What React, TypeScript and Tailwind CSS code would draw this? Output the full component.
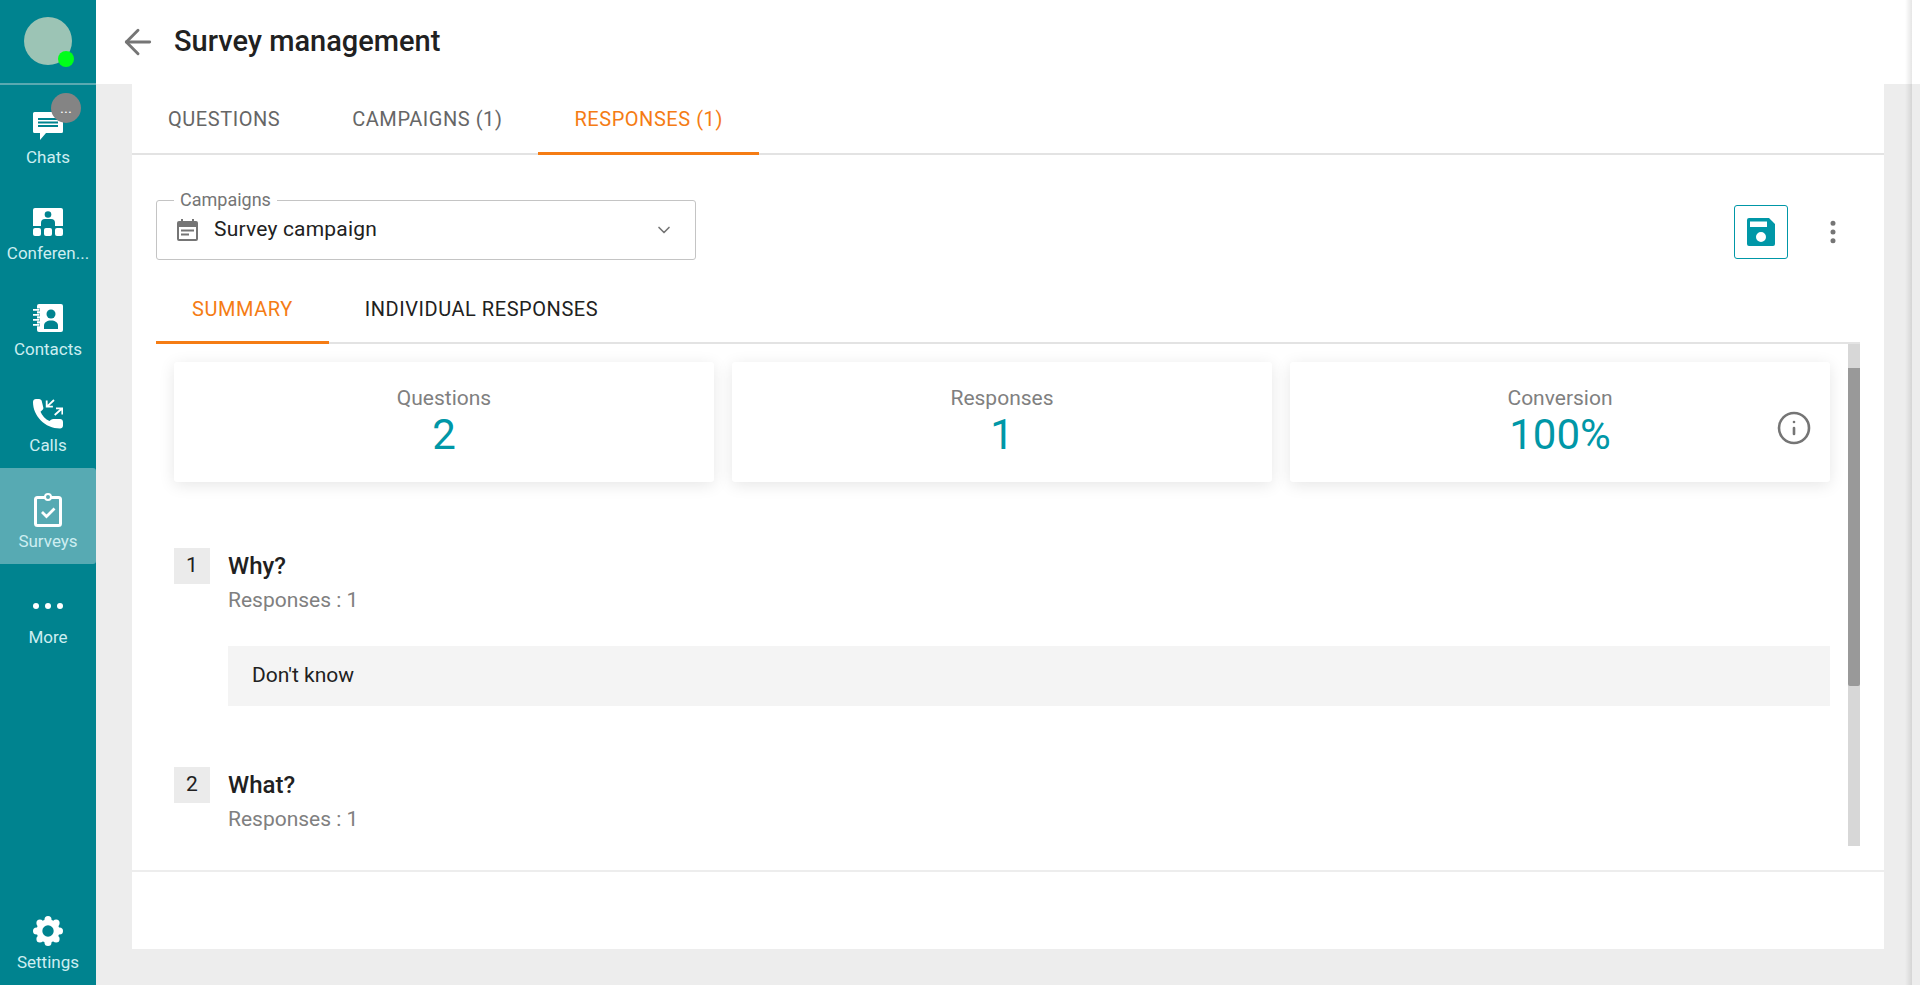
import React from "react";
import { ArrowLeft, ChevronDown, Info, MoreVertical } from "lucide-react";

const font = { fontFamily: "Roboto, sans-serif" };

const ChatIcon = () => (
  <svg width="30" height="28" viewBox="0 0 30 28" fill="white">
    <path d="M1.500 0h27A1.500 1.500 0 0 1 30 1.500v18a1.500 1.500 0 0 1-1.500 1.500H13l-6 7v-7H1.500A1.500 1.500 0 0 1 0 19.500v-18A1.500 1.500 0 0 1 1.500 0z" />
    <path d="M5 6h20v2H5zM5 9.500h20v2H5zM5 13h20v2H5z" fill="#00838f" />
  </svg>
);

const ConferenceIcon = () => (
  <svg width="30" height="28" viewBox="0 0 30 28" fill="white">
    <path d="M2 0h26a2 2 0 0 1 2 2v16H0V2a2 2 0 0 1 2-2z" />
    <circle cx="15" cy="6.500" r="3.300" fill="#00838f" />
    <path d="M8 18v-3a4 4 0 0 1 4-4h6a4 4 0 0 1 4 4v3z" fill="#00838f" />
    <rect x="0" y="20" width="8" height="8" rx="2" />
    <rect x="11" y="20" width="8" height="8" rx="2" />
    <rect x="22" y="20" width="8" height="8" rx="2" />
  </svg>
);

const ContactsIcon = () => (
  <svg width="30" height="28" viewBox="0 0 30 28" fill="white">
    <path d="M4 2a2 2 0 0 1 2-2h22a2 2 0 0 1 2 2v24a2 2 0 0 1-2 2H6a2 2 0 0 1-2-2z" />
    <path d="M0 4.500h7v2.800H0zM0 9.500h7v2.800H0zM0 14.500h7v2.800H0zM0 19.500h7v2.800H0z" fill="#00838f" />
    <path d="M0 5h6.500v1.800H0zM0 10h6.500v1.800H0zM0 15h6.500v1.800H0zM0 20h6.500v1.800H0z" />
    <circle cx="18" cy="10" r="4.500" fill="#00838f" />
    <path d="M11 25v-3.500c0-3 3-5 7-5s7 2 7 5V25z" fill="#00838f" />
  </svg>
);

const CallsIcon = () => (
  <svg width="30" height="30" viewBox="0 0 30 30" fill="none">
    <path fill="white" d="M3 0h3c1.500 0 2.500 1 2.800 2.200l1.500 6.300c.3 1.200-.3 2-1.200 2.700l-1.600 1.500c1.500 3.800 5 7.600 9 9.300l1.500-1.200c.8-.6 1.600-.8 2.500-.8H27c1.700 0 3 1.300 3 3v3.500c0 1.700-1.300 3-3 3C12 29.500 0 17 0 3c0-1.700 1.300-3 3-3z" />
    <path stroke="white" strokeWidth="1.800" d="M21 1l-7 6.700M13.700 1.500v6.200h6.200M21.700 16l7.600-6.700M23 9.300h6.300v6.200" />
  </svg>
);

const SurveysIcon = () => (
  <svg width="28" height="34" viewBox="0 0 28 34" fill="none">
    <rect x="1.500" y="4.500" width="25" height="28" rx="2" stroke="white" strokeWidth="3" />
    <circle cx="14" cy="4" r="3" stroke="white" strokeWidth="2" fill="#57aab3" />
    <path d="M8 19l4.500 4.500L20.500 15.500" stroke="white" strokeWidth="2.800" />
  </svg>
);

// eight rounded lobes round a disc with a small hole
const SettingsIcon = () => (
  <svg width="30" height="30" viewBox="0 0 30 30" fill="white">
    <circle cx="15" cy="15" r="11.500" />
    <circle cx="15" cy="3.500" r="3.500" />
    <circle cx="15" cy="26.500" r="3.500" />
    <circle cx="3.500" cy="15" r="3.500" />
    <circle cx="26.500" cy="15" r="3.500" />
    <circle cx="6.900" cy="6.900" r="3.500" />
    <circle cx="23.100" cy="6.900" r="3.500" />
    <circle cx="6.900" cy="23.100" r="3.500" />
    <circle cx="23.100" cy="23.100" r="3.500" />
    <circle cx="15" cy="15" r="5.700" fill="#00838f" />
  </svg>
);

const CalendarIcon = () => (
  <svg width="21" height="22" viewBox="0 0 21 22" fill="#757575">
    <path fillRule="evenodd" d="M4 0h2v2h9V0h2v2h2a2 2 0 0 1 2 2v16a2 2 0 0 1-2 2H2a2 2 0 0 1-2-2V4a2 2 0 0 1 2-2h2zM2 8v12h17V8z" />
    <path d="M4 10.500h13v2H4zM4 14.500h8v2H4z" />
  </svg>
);

const SaveIcon = () => (
  <svg width="28" height="28" viewBox="0 0 28 28" fill="#0097a7">
    <path fillRule="evenodd" d="M2 0h20l6 6v20a2 2 0 0 1-2 2H2a2 2 0 0 1-2-2V2a2 2 0 0 1 2-2zm1 3.500V9h17V3.500zM14 14a5 5 0 1 0 0 10 5 5 0 0 0 0-10z" />
  </svg>
);

const NavItem = ({ icon, label, active, badge }: { icon: React.ReactNode; label: string; active?: boolean; badge?: boolean }) => (
  <div className={`relative flex h-24 w-full shrink-0 flex-col items-center rounded-r-[3px] pt-6 ${active ? "bg-[#57aab3]" : ""}`}>
    <div className="flex h-9 items-center justify-center">{icon}</div>
    <span className="mt-[3px] w-full truncate text-center text-[17px] leading-5 text-[#cdeef1]">{label}</span>
    {badge && (
      <span className="absolute left-[51px] top-[9px] flex h-[30px] w-[30px] items-center justify-center rounded-full bg-[#848484] text-[15px] leading-none text-white">
        ...
      </span>
    )}
  </div>
);

const StatCard = ({ label, value, info }: { label: string; value: string; info?: boolean }) => (
  <div className="relative flex h-[120px] flex-1 flex-col items-center rounded-[3px] bg-white pt-6 shadow-[0_3px_16px_rgba(0,0,0,0.1)]">
    <span className="text-[21px] leading-6 text-[#808080]">{label}</span>
    <span className="text-[42px] leading-[50px] text-[#0097a7]">{value}</span>
    {info && <Info className="absolute right-[18px] top-[48px] text-[#757575]" size={36} strokeWidth={1.75} />}
  </div>
);

const Question = ({ num, title, answer }: { num: string; title: string; answer?: string }) => (
  <div className="flex gap-[18px]">
    <div className="flex h-9 w-9 shrink-0 items-center justify-center bg-[#ebebeb] text-[21px] text-[#212121]">{num}</div>
    <div className="flex-1">
      <div className="text-[24px] font-medium leading-9 text-[#212121]">{title}</div>
      <div className="mt-1 text-[21px] leading-6 text-[#808080]">Responses : 1</div>
      {answer && <div className="mt-[34px] flex h-[60px] items-center bg-[#f4f4f4] pl-6 text-[21px] text-[#212121]">{answer}</div>}
    </div>
  </div>
);

const App = () => {
  return (
    <div className="relative flex h-[985px] w-[1920px] overflow-hidden bg-[#ededed]" style={font}>
      {/* Sidebar */}
      <aside className="flex h-full w-24 shrink-0 flex-col items-center bg-[#00838f]">
        <div className="-mb-px flex h-[85px] w-full shrink-0 items-start justify-center border-b-2 border-[#5aa9b1] pt-[17px]">
          <div className="relative h-12 w-12 rounded-full bg-[#9cc4b5]">
            <span className="absolute left-[34px] top-[34px] h-[16px] w-[16px] rounded-full bg-[#00ff19]" />
          </div>
        </div>
        <NavItem icon={<ChatIcon />} label="Chats" badge />
        <NavItem icon={<ConferenceIcon />} label="Conferen..." />
        <NavItem icon={<ContactsIcon />} label="Contacts" />
        <NavItem icon={<CallsIcon />} label="Calls" />
        <NavItem icon={<SurveysIcon />} label="Surveys" active />
        <NavItem
          icon={
            <div className="flex gap-[6px]">
              <span className="h-[6px] w-[6px] rounded-full bg-white" />
              <span className="h-[6px] w-[6px] rounded-full bg-white" />
              <span className="h-[6px] w-[6px] rounded-full bg-white" />
            </div>
          }
          label="More"
        />
        <div className="mt-auto w-full">
          <NavItem icon={<SettingsIcon />} label="Settings" />
        </div>
      </aside>

      {/* Main */}
      <main className="flex min-w-0 flex-1 flex-col">
        <header className="flex h-[84px] shrink-0 items-center bg-white pl-[22px]">
          <ArrowLeft className="text-[#757575]" size={40} strokeWidth={1.75} />
          <h1 className="ml-4 text-[29px] font-medium text-[#212121]">Survey management</h1>
        </header>

        <div className="ml-9 flex h-[865px] w-[1752px] flex-col bg-white">
          {/* Top tabs */}
          <div className="flex h-[71px] shrink-0 border-b-2 border-[#e3e3e3] text-[20px] tracking-[0.55px] text-[#666666]">
            <div className="flex h-[69px] items-center px-9">QUESTIONS</div>
            <div className="flex h-[69px] items-center px-9">CAMPAIGNS (1)</div>
            <div className="flex h-[71px] items-center border-b-[3px] border-[#f57c14] px-9 pt-px text-[#f57c14]">RESPONSES (1)</div>
          </div>

          <div className="flex min-h-0 flex-1 flex-col px-6">
            {/* Campaign select */}
            <div className="mt-[45px] flex shrink-0 items-start justify-between">
              <div className="relative flex h-[60px] w-[540px] items-center rounded-[3px] border border-[#c4c4c4] pl-5 pr-[21px]">
                <span className="absolute -top-[11px] left-[17px] bg-white px-[6px] text-[18px] leading-5 text-[#757575]">Campaigns</span>
                <CalendarIcon />
                <span className="ml-4 text-[21px] tracking-[0.2px] text-[#212121]">Survey campaign</span>
                <ChevronDown className="ml-auto text-[#757575]" size={20} />
              </div>
              <div className="flex items-center">
                <div className="mt-[5px] flex h-[54px] w-[54px] items-center justify-center rounded-[3px] border border-[#0097a7]">
                  <SaveIcon />
                </div>
                <MoreVertical className="ml-[30px] mr-3 mt-[5px] text-[#757575]" size={30} fill="#757575" />
              </div>
            </div>

            {/* Sub tabs */}
            <div className="mt-5 flex h-16 shrink-0 border-b-2 border-[#e3e3e3] text-[20px] tracking-[0.55px] text-[#212121]">
              <div className="flex h-16 items-center border-b-[3px] border-[#f57c14] px-9 pb-1 text-[#f57c14]">SUMMARY</div>
              <div className="flex h-16 items-center border-b-[3px] border-transparent px-9 pb-1">INDIVIDUAL RESPONSES</div>
            </div>

            {/* Scrollable summary */}
            <div className="relative h-[502px] shrink-0 overflow-hidden pl-[18px] pr-[30px]">
              <div className="mt-[18px] flex gap-[18px]">
                <StatCard label="Questions" value="2" />
                <StatCard label="Responses" value="1" />
                <StatCard label="Conversion" value="100%" info />
              </div>
              <div className="mt-[66px] flex flex-col gap-[61px]">
                <Question num="1" title="Why?" answer="Don't know" />
                <Question num="2" title="What?" />
              </div>
              <div className="absolute bottom-0 right-0 top-0 w-3 bg-[#d7d7d7]">
                <div className="mt-6 h-[318px] rounded-b-[2px] bg-[#999999]" />
              </div>
            </div>

            <div className="mx-[-24px] mt-6 border-t-2 border-[#ededed]" />
          </div>
        </div>
      </main>

      {/* Shadow of the panel that sits off the right edge */}
      <div className="absolute bottom-0 right-2 top-0 w-[7px] bg-gradient-to-r from-transparent to-black/10" />
    </div>
  );
};

export default App;
